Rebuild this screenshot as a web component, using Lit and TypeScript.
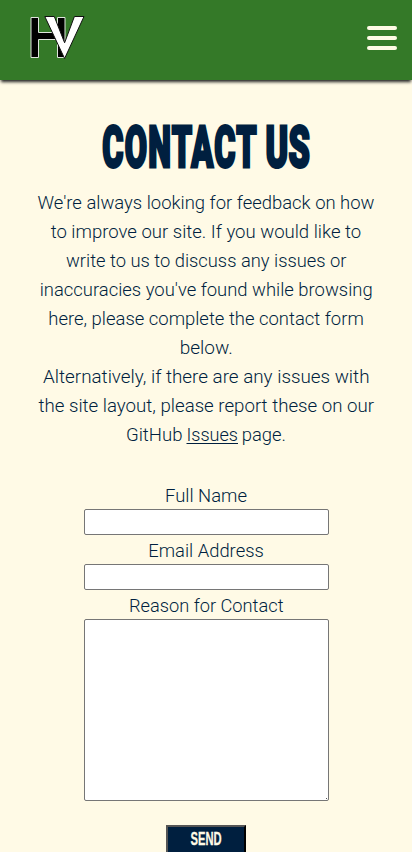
import { LitElement, html, svg, css } from "lit";
import { customElement } from "lit/decorators.js";

type Word = { text: string; x: number; w: number; link?: boolean };

const intro: Word[][] = [
  [{ text: "We're always looking for feedback on how", x: 37.5, w: 337 }],
  [{ text: "to improve our site. If you would like to", x: 50.7, w: 310.5 }],
  [{ text: "write to us to discuss any issues or", x: 66, w: 280.5 }],
  [{ text: "inaccuracies you've found while browsing", x: 39.7, w: 333 }],
  [{ text: "here, please complete the contact form", x: 48.3, w: 315.5 }],
  [{ text: "below.", x: 179.7, w: 53 }],
];
const alternative: Word[][] = [
  [{ text: "Alternatively, if there are any issues with", x: 43, w: 326.5 }],
  [{ text: "the site layout, please report these on our", x: 38.5, w: 335.5 }],
  [
    { text: "GitHub", x: 126, w: 56.5 },
    { text: "Issues", x: 186.5, w: 51.5, link: true },
    { text: "page.", x: 241.7, w: 44.3 },
  ],
];

@customElement("app-root")
export class AppRoot extends LitElement {
  static styles = css`
    :host {
      display: block;
      height: 852px;
      overflow: hidden;
      background: #fffae6;
      color: #001f3f;
      font-family: Roboto, "Open Sans", sans-serif;
      font-weight: 300;
    }
    header {
      height: 80px;
      box-sizing: border-box;
      padding: 14px 15px 0 28px;
      display: flex;
      justify-content: space-between;
      background: #347928;
      box-shadow: 0 3px 3px -1px #222;
    }
    svg {
      display: block;
      overflow: visible;
    }
    .menu {
      margin-top: 12px;
      width: 30px;
      height: 24px;
      display: flex;
      flex-direction: column;
      justify-content: space-between;
    }
    .bar {
      height: 4px;
      border-radius: 2px;
      background: #fffae6;
    }
    h1 {
      margin: 35px 0 0;
      height: 73px;
    }
    .title {
      font-size: 57px;
      font-weight: 900;
      fill: #001f3f;
      stroke: #001f3f;
      stroke-width: 2.4px;
      vector-effect: non-scaling-stroke;
    }
    p {
      margin: 0;
    }
    .line {
      font-size: 18.6px;
      font-weight: 300;
      fill: #001f3f;
    }
    .underline {
      fill: #001f3f;
    }
    form {
      margin-top: 31px;
      display: flex;
      flex-direction: column;
      align-items: center;
    }
    label {
      display: block;
    }
    input,
    textarea {
      box-sizing: border-box;
      width: 245px;
      height: 26px;
      margin: 0 0 0 1px;
      border: 1px solid #767676;
      border-radius: 2px;
      background: #fff;
      outline: none;
    }
    textarea {
      height: 182px;
      resize: none;
    }
    .area {
      display: grid;
    }
    .area > * {
      grid-area: 1 / 1;
    }
    .grip {
      align-self: end;
      justify-self: end;
      width: 1px;
      height: 1px;
      margin: 0 2px 2px 0;
      background: #555;
    }
    button {
      box-sizing: border-box;
      width: 80px;
      height: 37px;
      margin-top: 24px;
      padding: 0;
      border: 2px solid;
      border-color: #555 #000 #000 #555;
      background: #001f3f;
    }
    .send {
      font-size: 19px;
      font-weight: 800;
      fill: #fffae6;
      stroke: #fffae6;
      stroke-width: 0.3px;
    }
  `;

  private line(words: Word[], baseline = 21) {
    return html`<svg width="412" height="29" viewBox="0 0 412 29">
      ${words.map(
        (t) => svg`<text class="line" x=${t.x} y=${baseline} textLength=${t.w} lengthAdjust="spacingAndGlyphs">${t.text}</text>
          ${t.link ? svg`<rect class="underline" x=${t.x} y="23" width=${t.w} height="1"/>` : ""}`
      )}
    </svg>`;
  }

  render() {
    return html`
      <header>
        <svg width="60" height="48" viewBox="28 14 60 48">
          <path d="M31 17.5h7.5v15h19v-15H65V57.5h-7.5V39.5h-19v18H31z" fill="#000" stroke="#dde5dc" stroke-width="1" />
          <path d="M44.8 16.5h9.5L64.6 42.8 74.4 16.5h9.6L64.6 58.5z" fill="#fff" stroke="#111" stroke-width="1" />
        </svg>
        <div class="menu">
          <div class="bar"></div><div class="bar"></div><div class="bar"></div>
        </div>
      </header>
      <main>
        <h1>
          <svg width="412" height="73" viewBox="0 115 412 73">
            <text class="title" transform="translate(102.3 167) scale(.567 1)" textLength="272" lengthAdjust="spacing">CONTACT</text>
            <text class="title" transform="translate(265.5 167) scale(.6 1)" textLength="74" lengthAdjust="spacing">US</text>
          </svg>
        </h1>
        <p>${intro.map((l) => this.line(l))}</p>
        <p>${alternative.map((l) => this.line(l))}</p>
        <form>
          <label>${this.line([{ text: "Full Name", x: 165, w: 82 }], 22)}</label>
          <input type="text" />
          <label>${this.line([{ text: "Email Address", x: 148.3, w: 115.5 }], 22)}</label>
          <input type="email" />
          <label>${this.line([{ text: "Reason for Contact", x: 129, w: 154.5 }], 22)}</label>
          <div class="area"><textarea></textarea><span class="grip"></span></div>
          <button type="button">
            <svg width="76" height="33" viewBox="168 827 76 33">
              <text class="send" x="190.5" y="845" textLength="31" lengthAdjust="spacingAndGlyphs">SEND</text>
            </svg>
          </button>
        </form>
      </main>
    `;
  }
}
